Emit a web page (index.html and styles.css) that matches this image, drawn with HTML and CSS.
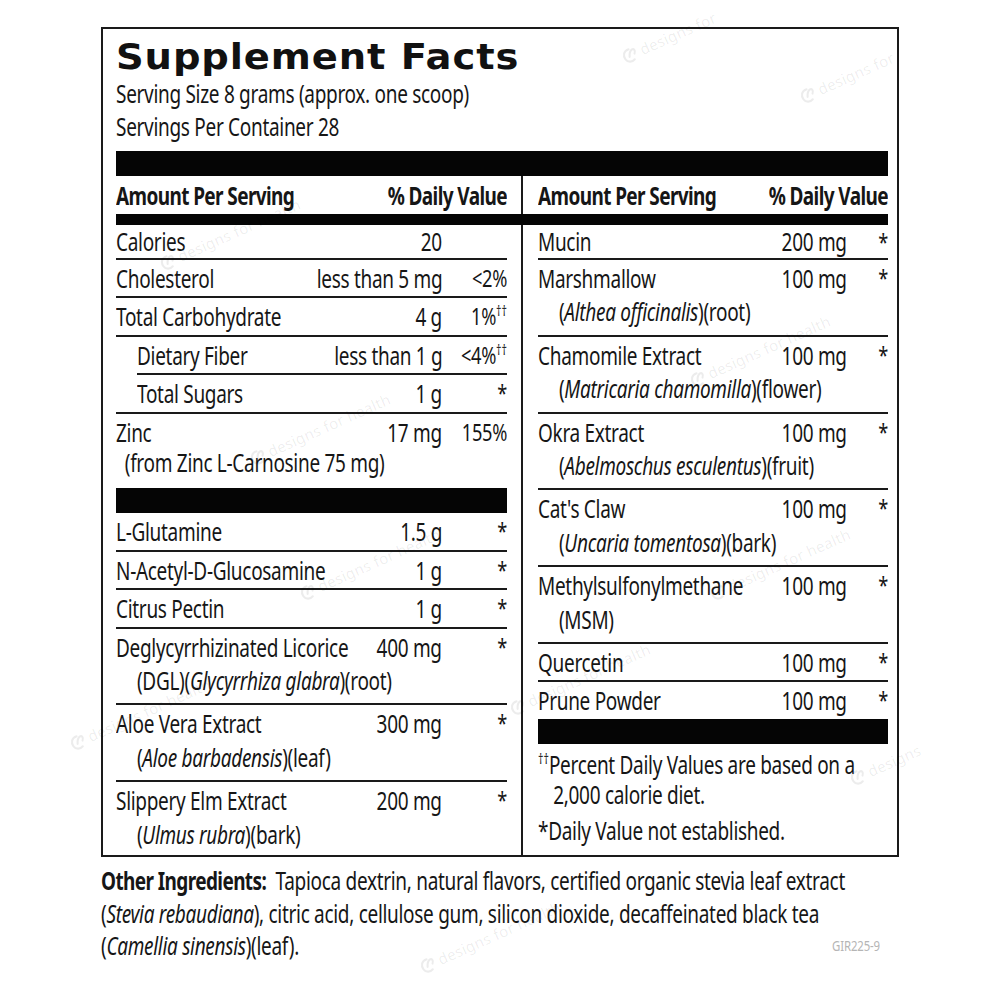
FILE: index.html
```html
<!DOCTYPE html>
<html lang="en">
<head>
<meta charset="utf-8">
<title>Supplement Facts</title>
<link rel="stylesheet" href="styles.css">
</head>
<body>
<div class="page">
  <section class="facts">
    <h1 class="title"><span>Supplement Facts</span></h1>
    <div class="serving">Serving Size 8 grams (approx. one scoop)</div>
    <div class="serving">Servings Per Container 28</div>
    <div class="bar"></div>
    <div class="cols">
      <div class="head left-head"><span class="hl">Amount Per Serving</span><span class="hr">% Daily Value</span></div>
      <div class="divider"></div>
      <div class="head right-head"><span class="hl">Amount Per Serving</span><span class="hr">% Daily Value</span></div>
      <div class="thick"></div>

      <div class="col left">
        <div class="row first"><span class="nm">Calories</span><span class="amt">20</span><span class="dv"></span></div>
        <div class="row"><span class="nm">Cholesterol</span><span class="amt">less than 5 mg</span><span class="dv">&lt;2%</span></div>
        <div class="row"><span class="nm">Total Carbohydrate</span><span class="amt">4 g</span><span class="dv">1%<sup>††</sup></span></div>
        <div class="row indent"><span class="nm">Dietary Fiber</span><span class="amt">less than 1 g</span><span class="dv">&lt;4%<sup>††</sup></span></div>
        <div class="row pad"><span class="nm">Total Sugars</span><span class="amt">1 g</span><span class="dv">*</span></div>
        <div class="row last"><span class="nm">Zinc</span><span class="amt">17 mg</span><span class="dv">155%</span><span class="sub sub-zinc">(from Zinc L-Carnosine 75 mg)</span></div>
        <div class="bar"></div>
        <div class="row"><span class="nm">L-Glutamine</span><span class="amt">1.5 g</span><span class="dv">*</span></div>
        <div class="row"><span class="nm">N-Acetyl-D-Glucosamine</span><span class="amt">1 g</span><span class="dv">*</span></div>
        <div class="row"><span class="nm">Citrus Pectin</span><span class="amt">1 g</span><span class="dv">*</span></div>
        <div class="row"><span class="nm">Deglycyrrhizinated Licorice</span><span class="amt">400 mg</span><span class="dv">*</span><span class="sub">(DGL)(<i>Glycyrrhiza glabra</i>)(root)</span></div>
        <div class="row"><span class="nm">Aloe Vera Extract</span><span class="amt">300 mg</span><span class="dv">*</span><span class="sub">(<i>Aloe barbadensis</i>)(leaf)</span></div>
        <div class="row last end"><span class="nm">Slippery Elm Extract</span><span class="amt">200 mg</span><span class="dv">*</span><span class="sub">(<i>Ulmus rubra</i>)(bark)</span></div>
      </div>

      <div class="col right">
        <div class="row first"><span class="nm">Mucin</span><span class="amt">200 mg</span><span class="dv">*</span></div>
        <div class="row"><span class="nm">Marshmallow</span><span class="amt">100 mg</span><span class="dv">*</span><span class="sub">(<i>Althea officinalis</i>)(root)</span></div>
        <div class="row"><span class="nm">Chamomile Extract</span><span class="amt">100 mg</span><span class="dv">*</span><span class="sub">(<i>Matricaria chamomilla</i>)(flower)</span></div>
        <div class="row"><span class="nm">Okra Extract</span><span class="amt">100 mg</span><span class="dv">*</span><span class="sub">(<i>Abelmoschus esculentus</i>)(fruit)</span></div>
        <div class="row"><span class="nm">Cat's Claw</span><span class="amt">100 mg</span><span class="dv">*</span><span class="sub">(<i>Uncaria tomentosa</i>)(bark)</span></div>
        <div class="row"><span class="nm">Methylsulfonylmethane</span><span class="amt">100 mg</span><span class="dv">*</span><span class="sub">(MSM)</span></div>
        <div class="row"><span class="nm">Quercetin</span><span class="amt">100 mg</span><span class="dv">*</span></div>
        <div class="row last"><span class="nm">Prune Powder</span><span class="amt">100 mg</span><span class="dv">*</span></div>
        <div class="bar"></div>
        <p class="note note-first"><sup>††</sup>Percent Daily Values are based on a</p>
        <p class="note note-cont">2,000 calorie diet.</p>
        <p class="note note-last">*Daily Value not established.</p>
      </div>
    </div>
  </section>
  <div class="other">
    <p class="ingredients"><b>Other Ingredients:</b>&nbsp; Tapioca dextrin, natural flavors, certified organic stevia leaf extract<br>(<i>Stevia rebaudiana</i>), citric acid, cellulose gum, silicon dioxide, decaffeinated black tea<br>(<i>Camellia sinensis</i>)(leaf).</p>
    <span class="code">GIR225-9</span>
  </div>

  <div class="watermarks" aria-hidden="true">
    <span class="wm wm1"><svg viewBox="0 0 16 16"><path d="M9 2.5C4 2 1.5 6 2.5 10s5 5 8 3.5M7 9.5c1-3 2.5-5 4.5-5.5 2.5-.5 3 2.5 1 4.5"/></svg>designs for</span>
    <span class="wm wm2"><svg viewBox="0 0 16 16"><path d="M9 2.5C4 2 1.5 6 2.5 10s5 5 8 3.5M7 9.5c1-3 2.5-5 4.5-5.5 2.5-.5 3 2.5 1 4.5"/></svg>designs for</span>
    <span class="wm wm3"><svg viewBox="0 0 16 16"><path d="M9 2.5C4 2 1.5 6 2.5 10s5 5 8 3.5M7 9.5c1-3 2.5-5 4.5-5.5 2.5-.5 3 2.5 1 4.5"/></svg>designs for health</span>
    <span class="wm wm4"><svg viewBox="0 0 16 16"><path d="M9 2.5C4 2 1.5 6 2.5 10s5 5 8 3.5M7 9.5c1-3 2.5-5 4.5-5.5 2.5-.5 3 2.5 1 4.5"/></svg>designs for health</span>
    <span class="wm wm5"><svg viewBox="0 0 16 16"><path d="M9 2.5C4 2 1.5 6 2.5 10s5 5 8 3.5M7 9.5c1-3 2.5-5 4.5-5.5 2.5-.5 3 2.5 1 4.5"/></svg>designs for health</span>
    <span class="wm wm6"><svg viewBox="0 0 16 16"><path d="M9 2.5C4 2 1.5 6 2.5 10s5 5 8 3.5M7 9.5c1-3 2.5-5 4.5-5.5 2.5-.5 3 2.5 1 4.5"/></svg>designs for health</span>
    <span class="wm wm7"><svg viewBox="0 0 16 16"><path d="M9 2.5C4 2 1.5 6 2.5 10s5 5 8 3.5M7 9.5c1-3 2.5-5 4.5-5.5 2.5-.5 3 2.5 1 4.5"/></svg>designs for health</span>
    <span class="wm wm8"><svg viewBox="0 0 16 16"><path d="M9 2.5C4 2 1.5 6 2.5 10s5 5 8 3.5M7 9.5c1-3 2.5-5 4.5-5.5 2.5-.5 3 2.5 1 4.5"/></svg>designs for health</span>
    <span class="wm wm9"><svg viewBox="0 0 16 16"><path d="M9 2.5C4 2 1.5 6 2.5 10s5 5 8 3.5M7 9.5c1-3 2.5-5 4.5-5.5 2.5-.5 3 2.5 1 4.5"/></svg>designs</span>
    <span class="wm wm10"><svg viewBox="0 0 16 16"><path d="M9 2.5C4 2 1.5 6 2.5 10s5 5 8 3.5M7 9.5c1-3 2.5-5 4.5-5.5 2.5-.5 3 2.5 1 4.5"/></svg>designs for health</span>
    <span class="wm wm11"><svg viewBox="0 0 16 16"><path d="M9 2.5C4 2 1.5 6 2.5 10s5 5 8 3.5M7 9.5c1-3 2.5-5 4.5-5.5 2.5-.5 3 2.5 1 4.5"/></svg>designs for health</span>
  </div>
</div>
</body>
</html>
```

FILE: styles.css
```css
* { box-sizing: border-box; }

html, body {
  margin: 0;
  padding: 0;
  background: #fff;
  overflow: hidden;
}

body {
  color: #161616;
  font-family: "Noto Sans", "Open Sans", sans-serif;
  font-size: 25px;
  letter-spacing: -0.4px;
}

/* condensed look: text cells are narrowed horizontally */
.serving,
.hl, .nm, .sub, .note, .ingredients {
  transform: scaleX(0.76);
  transform-origin: left center;
}

.hr, .amt, .dv, .code {
  transform: scaleX(0.76);
  transform-origin: right center;
}

.page {
  position: relative;
  padding: 27px 0 0 101px;
  width: 1000px;
  height: 1000px;
}

.facts {
  width: 798px;
  border: 2px solid #1a1a1a;
  padding: 0 9px 0 13px;
}

.title {
  margin: 0;
  padding-top: 8px;
  font-family: "DejaVu Sans", "Liberation Sans", sans-serif;
  font-weight: 700;
  font-size: 35px;
  line-height: 40px;
  letter-spacing: 0.8px;
  color: #111;
}

.title span {
  display: inline-block;
  transform: scaleX(1.1);
  transform-origin: left center;
}

.serving {
  line-height: 33px;
  white-space: nowrap;
}

.bar {
  height: 25px;
  background: #050505;
}

.facts > .bar {
  margin-top: 8px;
}

.cols {
  display: grid;
  grid-template-columns: 391px 31px minmax(0, 1fr);
  grid-template-rows: 38px 11px 1fr;
}

.head {
  display: grid;
  grid-template-columns: minmax(0, 1fr) auto;
  font-weight: 700;
  letter-spacing: -0.8px;
  line-height: 38px;
  white-space: nowrap;
}

.hl, .hr { display: block; }

.left-head { grid-column: 1; grid-row: 1; }
.right-head { grid-column: 3; grid-row: 1; }

.divider {
  grid-column: 2;
  grid-row: 1 / 4;
  width: 2px;
  margin-left: 14px;
  background: #1a1a1a;
}

.thick {
  grid-column: 1 / 4;
  grid-row: 2;
  background: #050505;
  position: relative;
  z-index: 1;
}

.col.left { grid-column: 1; grid-row: 3; }
.col.right { grid-column: 3; grid-row: 3; }

.row {
  display: grid;
  grid-template-columns: minmax(0, 1fr) auto 65px;
  line-height: 36.4px;
  border-bottom: 2px solid #1a1a1a;
  white-space: nowrap;
}

.right .row {
  grid-template-columns: minmax(0, 1fr) auto 41px;
}

.row.first {
  line-height: 33px;
}

.row.last {
  border-bottom: 0;
}

.row.indent {
  margin-left: 21px;
}

.row.pad {
  padding-left: 21px;
}

.nm, .amt, .dv { display: block; }

.amt, .dv {
  text-align: right;
}

.dv {
  font-size: 24px;
}

.sub {
  display: block;
  grid-column: 1 / -1;
  line-height: 31px;
  padding-bottom: 7.4px;
  padding-left: 27.6px;
}

.row.end .sub {
  padding-bottom: 5.4px;
}

.left .sub-zinc {
  padding-left: 11.5px;
  line-height: 25px;
  padding-bottom: 13.4px;
}

sup {
  font-size: 14px;
  line-height: 0;
  vertical-align: 9px;
  letter-spacing: 0;
}

.note {
  margin: 0;
  line-height: 30px;
  white-space: nowrap;
}

.note-first {
  margin-top: 5px;
}

.note-first sup {
  vertical-align: 10px;
}

.note-cont {
  padding-left: 20px;
}

.note-last {
  margin-top: 6px;
}

.other {
  display: flex;
  align-items: flex-end;
  width: 798px;
}

.ingredients {
  flex: 1;
  min-width: 0;
  margin: 7px 0 0 0;
  line-height: 32.5px;
  white-space: nowrap;
}

.ingredients b {
  letter-spacing: -0.8px;
}

.code {
  display: block;
  margin-right: 19px;
  margin-bottom: 8px;
  font-size: 15px;
  line-height: 18px;
  color: #b5b5b5;
  letter-spacing: -0.2px;
}

/* faint brand watermark laid over the label */
.watermarks {
  position: absolute;
  inset: 0;
  pointer-events: none;
  z-index: 2;
}

.wm {
  position: absolute;
  display: flex;
  align-items: center;
  gap: 3px;
  font-size: 15px;
  letter-spacing: 0.3px;
  color: rgba(0, 0, 0, 0.075);
  white-space: nowrap;
  transform: rotate(-24deg);
  transform-origin: left center;
}

.wm svg {
  width: 17px;
  height: 17px;
  fill: none;
  stroke: rgba(0, 0, 0, 0.075);
  stroke-width: 2;
  stroke-linecap: round;
}

.wm1 { left: 622px; top: 48px; }
.wm2 { left: 800px; top: 88px; }
.wm3 { left: 160px; top: 255px; }
.wm4 { left: 690px; top: 372px; }
.wm5 { left: 250px; top: 450px; }
.wm6 { left: 710px; top: 585px; }
.wm7 { left: 300px; top: 585px; }
.wm8 { left: 510px; top: 700px; }
.wm9 { left: 850px; top: 770px; }
.wm10 { left: 420px; top: 958px; }
.wm11 { left: 70px; top: 735px; }
```
